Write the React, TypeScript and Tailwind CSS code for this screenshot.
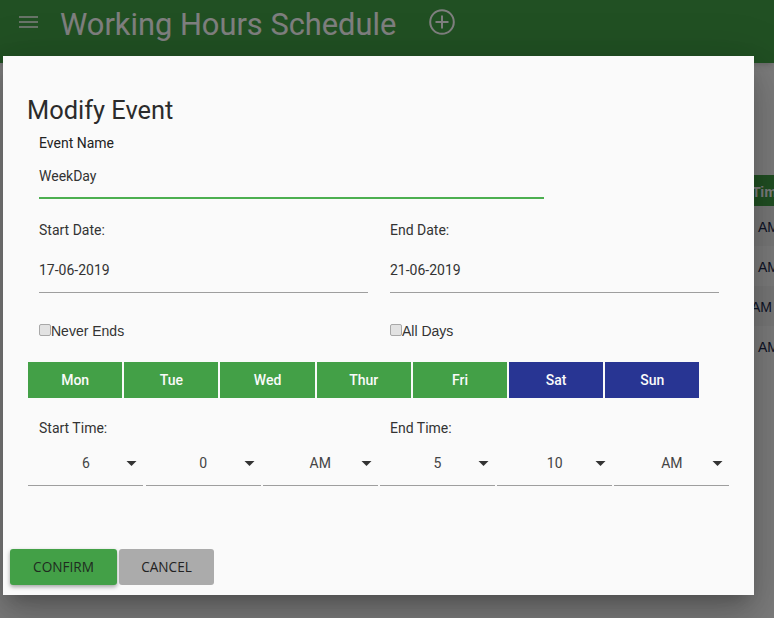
const days = [
  { label: 'Mon', on: true },
  { label: 'Tue', on: true },
  { label: 'Wed', on: true },
  { label: 'Thur', on: true },
  { label: 'Fri', on: true },
  { label: 'Sat', on: false },
  { label: 'Sun', on: false },
];

const times = ['6', '0', 'AM', '5', '10', 'AM'];
const rows = ['pl-[14px]', 'pl-[14px]', 'pl-[7px]', 'pl-[14px]'];

const DateField = ({ label, value }: { label: string; value: string }) => (
  <div className="w-[329px]">
    <div className="text-[14px] leading-[20px] text-[#333]">{label}</div>
    <div className="mt-[20px] h-[33px] border-b border-[#9e9e9e] text-[14px] leading-[20px] text-[#333]">{value}</div>
  </div>
);

const CheckField = ({ label }: { label: string }) => (
  <label className="flex w-[351px] items-center text-[14px] leading-[20px] text-[#333] font-['Liberation_Sans',sans-serif]">
    <span className="mb-[3px] h-[12px] w-[12px] rounded-[2px] border border-[#a8a8a8] bg-[#e2e2e2]" />
    {label}
  </label>
);

const TimeSelect = ({ value }: { value: string }) => (
  <div className="relative flex h-[46px] w-[115px] items-start justify-center border-b border-[#9e9e9e] pt-[13px] text-[14px] leading-[20px] text-[#444]">
    {value}
    <svg viewBox="7 10 10 5" className="absolute right-[6px] top-[21px] h-[5px] w-[11px]" fill="#333">
      <path d="M7 10l5 5 5-5z" />
    </svg>
  </div>
);

export default function App() {
  return (
    <div className="relative h-[618px] w-[774px] overflow-hidden bg-[#fafafa] font-['Roboto',sans-serif]">
      {/* page under the modal */}
      <header className="flex h-[63px] items-start bg-[#43a047] pl-[19px] text-white shadow-md">
        <svg viewBox="0 0 19 12" className="mt-[16px] h-[12px] w-[19px]" fill="none" stroke="currentColor" strokeWidth="1.5">
          <path d="M0 1h19M0 6h19M0 11h19" />
        </svg>
        <h1 className="ml-[22px] mt-[6px] text-[30.8px] leading-[38px]">Working Hours Schedule</h1>
        <svg viewBox="0 0 26 26" className="ml-[33px] mt-[9px] h-[26px] w-[26px]" fill="none" stroke="currentColor" strokeWidth="2">
          <circle cx="13" cy="13" r="11.8" />
          <path d="M13 6.5v13M6.5 13h13" />
        </svg>
      </header>
      <div className="ml-auto mt-[112px] w-[30px] overflow-hidden font-['Liberation_Sans',sans-serif] text-[14px]">
        <div className="h-[31px] whitespace-nowrap bg-[#43a047] pl-[8px] pt-[7px] font-bold text-white">Time</div>
        {rows.map((pad, i) => (
          <div key={i} className={`h-[40px] pt-[11px] text-[#212a4f] ${pad} ${i % 2 === 1 ? 'bg-[#fafafa]' : 'bg-[#f2f2f2]'}`}>
            AM
          </div>
        ))}
      </div>

      {/* modal */}
      <div className="absolute inset-0 bg-black/50" />
      <div className="absolute left-[3px] top-[56px] flex h-[539px] w-[751px] flex-col bg-[#fafafa] shadow-[0_11px_15px_-7px_rgba(0,0,0,0.2),0_24px_38px_3px_rgba(0,0,0,0.14),0_9px_46px_8px_rgba(0,0,0,0.12)]">
        <h2 className="ml-[24px] mt-[37px] text-[25.4px] leading-[34px] text-[#2b2b2b]">Modify Event</h2>

        <div className="ml-[36px] mt-[6px] w-[505px]">
          <div className="text-[14px] leading-[20px] text-[#222]">Event Name</div>
          <div className="mt-[13px] h-[33px] border-b-2 border-[#4caf50] text-[14px] leading-[20px] text-[#333]">WeekDay</div>
        </div>

        <div className="ml-[36px] mt-[21px] flex gap-[22px]">
          <DateField label="Start Date:" value="17-06-2019" />
          <DateField label="End Date:" value="21-06-2019" />
        </div>

        <div className="ml-[36px] mt-[28px] flex">
          <CheckField label="Never Ends" />
          <CheckField label="All Days" />
        </div>

        <div className="ml-[25.1px] mt-[21px] flex gap-[2px]">
          {days.map((d) => (
            <div
              key={d.label}
              className={`flex h-[36px] w-[94.2px] items-center justify-center text-[14px] font-medium text-[#fafafa] ${d.on ? 'bg-[#43a047]' : 'bg-[#283593]'}`}
            >
              {d.label}
            </div>
          ))}
        </div>

        <div className="ml-[36px] mt-[20px] flex gap-[22px] text-[14px] leading-[20px] text-[#333]">
          <div className="w-[329px]">Start Time:</div>
          <div>End Time:</div>
        </div>

        <div className="ml-[25.4px] mt-[2px] flex gap-[2.2px]">
          {times.map((t, i) => (
            <TimeSelect key={i} value={t} />
          ))}
        </div>

        <div className="ml-[7px] mt-auto mb-[10px] flex gap-[2px] font-['Open_Sans',sans-serif] text-[13.6px] text-[#1f2a1f]">
          <button className="h-[36px] w-[107px] rounded-[3px] bg-[#43a047] shadow-[0_2px_4px_rgba(0,0,0,0.35)]">CONFIRM</button>
          <button className="h-[36px] w-[95px] rounded-[3px] bg-[#ababab] text-[#222]">CANCEL</button>
        </div>
      </div>
    </div>
  );
}
